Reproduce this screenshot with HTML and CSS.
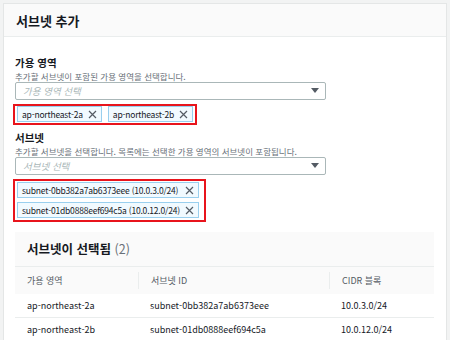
FILE: index.html
```html
<!DOCTYPE html>
<html lang="ko">
<head>
  <meta charset="UTF-8" />
  <title>서브넷 추가</title>
  <link rel="stylesheet" href="styles.css">
</head>
<body>
  <div class="panel">
    <div class="panel-header">
      <h2>서브넷 추가</h2>
    </div>

    <div class="panel-body">
      <div class="field az-field">
        <div class="label">가용 영역</div>
        <div class="desc">추가할 서브넷이 포함된 가용 영역을 선택합니다.</div>
        <div class="select">
          <span class="placeholder">가용 영역 선택</span>
          <svg class="caret" width="8" height="6" viewBox="0 0 8 6"><path d="M0 0h8L4 5z" fill="#545b64"/></svg>
        </div>
        <div class="tokens row">
          <div class="token"><span>ap-northeast-2a</span><svg class="x" width="9" height="9" viewBox="0 0 9 9"><path d="M1 1l7 7M8 1L1 8" stroke="#545b64" stroke-width="1.2"/></svg></div>
          <div class="token"><span>ap-northeast-2b</span><svg class="x" width="9" height="9" viewBox="0 0 9 9"><path d="M1 1l7 7M8 1L1 8" stroke="#545b64" stroke-width="1.2"/></svg></div>
        </div>
      </div>

      <div class="field subnet-field">
        <div class="label">서브넷</div>
        <div class="desc">추가할 서브넷을 선택합니다. 목록에는 선택한 가용 영역의 서브넷이 포함됩니다.</div>
        <div class="select">
          <span class="placeholder">서브넷 선택</span>
          <svg class="caret" width="8" height="6" viewBox="0 0 8 6"><path d="M0 0h8L4 5z" fill="#545b64"/></svg>
        </div>
        <div class="tokens column">
          <div class="token"><span>subnet-0bb382a7ab6373eee (10.0.3.0/24)</span><svg class="x" width="9" height="9" viewBox="0 0 9 9"><path d="M1 1l7 7M8 1L1 8" stroke="#545b64" stroke-width="1.2"/></svg></div>
          <div class="token"><span>subnet-01db0888eef694c5a (10.0.12.0/24)</span><svg class="x" width="9" height="9" viewBox="0 0 9 9"><path d="M1 1l7 7M8 1L1 8" stroke="#545b64" stroke-width="1.2"/></svg></div>
        </div>
      </div>

      <div class="selected">
        <h3>서브넷이 선택됨 <span class="count">(2)</span></h3>
        <div class="table">
          <div class="tr head">
            <div class="th">가용 영역</div>
            <div class="th">서브넷 ID</div>
            <div class="th">CIDR 블록</div>
          </div>
          <div class="tr">
            <div class="td">ap-northeast-2a</div>
            <div class="td">subnet-0bb382a7ab6373eee</div>
            <div class="td">10.0.3.0/24</div>
          </div>
          <div class="tr">
            <div class="td">ap-northeast-2b</div>
            <div class="td">subnet-01db0888eef694c5a</div>
            <div class="td">10.0.12.0/24</div>
          </div>
        </div>
      </div>
    </div>
  </div>
</body>
</html>
```

FILE: styles.css
```css
body {
  margin: 0;
  padding: 3px 3px 0 3px;
  background-color: #f2f3f3;
  font-family: "Noto Sans CJK KR", "Noto Sans", sans-serif;
  color: #16191f;
  height: 337px;
  overflow: hidden;
}

.panel {
  background-color: #fff;
  border: 1px solid #e4e6e6;
  border-bottom: none;
  height: 100%;
}

.panel-header {
  background-color: #fafafa;
  border-bottom: 1px solid #eaeded;
  height: 32px;
  display: flex;
  align-items: center;
  padding-left: 12px;
}

.panel-header h2 {
  margin: 0;
  font-size: 13px;
  font-weight: bold;
}

.panel-body {
  padding: 0 12px 0 11px;
}

.field .label {
  font-size: 10.5px;
  font-weight: bold;
  line-height: 15px;
}

.field .desc {
  font-size: 8.5px;
  color: #687078;
  line-height: 12px;
  white-space: nowrap;
}

.az-field {
  padding-top: 18px;
}

.subnet-field {
  padding-top: 5px;
}

.select {
  height: 16px;
  border: 1px solid #aab7b8;
  border-radius: 2px;
  display: flex;
  align-items: center;
  justify-content: space-between;
  padding: 0 6px 0 7px;
  width: 296px;
}

.placeholder {
  font-style: italic;
  color: #aab7b8;
  font-size: 9.5px;
}

.tokens {
  display: flex;
  width: fit-content;
  border: 2px solid #e8141c;
  margin-left: -2px;
  margin-top: 4px;
  gap: 6px;
  padding: 0 2px 1px 2px;
}

.tokens.column {
  flex-direction: column;
  gap: 4px;
  padding: 1px 5px 2px 2px;
}

.token {
  display: flex;
  align-items: center;
  justify-content: space-between;
  gap: 5px;
  height: 14px;
  border: 1px solid #99cfee;
  background-color: #f1faff;
  font-size: 8.5px;
  letter-spacing: -0.2px;
  white-space: nowrap;
  padding: 0 4px 0 4px;
}

.token .x {
  flex-shrink: 0;
}

.selected {
  background-color: #fafafa;
  margin-top: 10px;
}

.selected h3 {
  margin: 0;
  font-size: 12.5px;
  font-weight: bold;
  line-height: 16px;
  padding: 9px 0 9px 12px;
}

.selected .count {
  font-weight: normal;
  color: #687078;
}

.table {
  border-top: 1px solid #eaeded;
}

.tr {
  display: grid;
  grid-template-columns: 123px 191px 1fr;
  height: 23px;
  align-items: center;
  background-color: #fff;
  border-bottom: 1px solid #eaeded;
  font-size: 9px;
}

.tr.head {
  height: 27px;
  background-color: #fafafa;
  border-bottom: none;
  color: #545b64;
}

.th, .td {
  padding-left: 12px;
}

.th + .th {
  border-left: 1px solid #eaeded;
  line-height: 17px;
}
```
